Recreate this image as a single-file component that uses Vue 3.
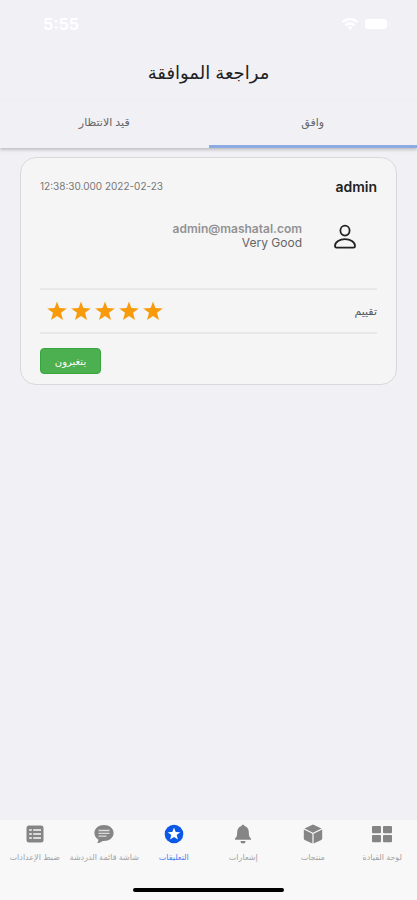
<script setup>
import { ref } from 'vue'

const tabs = ['وافق', 'قيد الانتظار']
const activeTab = ref(0)

const navItems = [
  { icon: 'grid', label: 'لوحة القيادة' },
  { icon: 'cube', label: 'منتجات' },
  { icon: 'bell', label: 'إشعارات' },
  { icon: 'star', label: 'التعليقات' },
  { icon: 'chat', label: 'شاشة قائمة الدردشة' },
  { icon: 'list', label: 'ضبط الإعدادات' },
]
const activeNav = 'star'
</script>

<template>
  <div class="screen" dir="rtl" lang="ar">
    <div class="status" dir="ltr">
      <span class="clock">5:55</span>
      <div class="signals">
        <svg width="18" height="14" viewBox="0 0 18 14" fill="none" stroke="#fff" stroke-width="2.4" aria-hidden="true">
          <path d="M1.5 5.2a10.6 10.6 0 0 1 15 0M4.4 8.4a6.5 6.5 0 0 1 9.2 0" />
          <path d="M9 13l-2.4-2.6a3.4 3.4 0 0 1 4.8 0z" fill="#fff" stroke="none" />
        </svg>
        <svg width="27" height="12" viewBox="0 0 27 12" aria-hidden="true">
          <rect x="1" y="1" width="22" height="10" rx="3" fill="#fff" />
          <path d="M25 4v4" stroke="#f7f7fa" stroke-width="1.5" />
        </svg>
      </div>
    </div>

    <h1 class="title">مراجعة الموافقة</h1>

    <div class="tabs" role="tablist">
      <button
        v-for="(tab, i) in tabs"
        :key="tab"
        type="button"
        role="tab"
        class="tab"
        :class="{ active: activeTab === i }"
        :aria-selected="activeTab === i"
        @click="activeTab = i"
      >{{ tab }}</button>
    </div>

    <main class="content">
      <article class="card">
        <header class="card-head">
          <h2 class="name">admin</h2>
          <time class="date" dir="ltr">12:38:30.000 2022-02-23</time>
        </header>

        <div class="review">
          <svg class="avatar" width="24" height="26" viewBox="0 0 24 26" fill="none" stroke="#222" stroke-width="1.8" stroke-linejoin="round" aria-hidden="true">
            <ellipse cx="12" cy="6.6" rx="4.6" ry="5" />
            <path d="M2 22c0-4.2 4.8-6.8 10-6.8s10 2.6 10 6.800c0 1-.5 1.600-1.500 1.600h-17c-1 0-1.500-.6-1.500-1.600z" />
          </svg>
          <div class="comment" dir="ltr">
            <p class="email">admin@mashatal.com</p>
            <p class="text">Very Good</p>
          </div>
        </div>

        <div class="rating">
          <span class="rating-label">تقييم</span>
          <div class="stars" role="img" aria-label="5 / 5">
            <svg v-for="n in 5" :key="n" width="20" height="20" viewBox="0 0 20 20">
              <path fill="#f79a0b" d="M10 .5l2.4 6.6 7.4.3-5.8 4.4 2 7.1-6-4-6 4 2-7.100L.2 7.400l7.400-.3z" />
            </svg>
          </div>
        </div>

        <footer class="actions">
          <button type="button" class="approve">يتغيرون</button>
        </footer>
      </article>
    </main>

    <nav class="bottom">
      <div class="nav-items">
        <a
          v-for="item in navItems"
          :key="item.icon"
          href="#"
          class="nav-item"
          :class="{ current: item.icon === activeNav }"
          @click.prevent
        >
          <svg width="20" height="20" viewBox="0 0 20 20" fill="currentColor" aria-hidden="true">
            <g v-if="item.icon === 'grid'">
              <rect x="0" y="2" width="9" height="7.300" rx="1" />
              <rect x="11" y="2" width="9" height="7.300" rx="1" />
              <rect x="0" y="11" width="9" height="7.300" rx="1" />
              <rect x="11" y="11" width="9" height="7.300" rx="1" />
            </g>
            <g v-else-if="item.icon === 'cube'">
              <path d="M10 .5l8.500 4-8.500 4.200-8.500-4.200z" />
              <path d="M.8 5.500l8.600 4.200v9.900L1.700 16a1.500 1.500 0 0 1-.9-1.400z" />
              <path d="M19.200 5.500l-8.600 4.200v9.900l7.700-3.600a1.500 1.500 0 0 0 .9-1.400z" />
            </g>
            <g v-else-if="item.icon === 'bell'">
              <path d="M10 .8c.8 0 1.300.5 1.400 1.200 2.900.7 4.400 3 4.400 6 0 4.200.8 5.300 2.200 6.600v1.200H2v-1.200C3.400 13.300 4.200 12.200 4.200 8c0-3 1.500-5.300 4.400-6 .1-.7.6-1.200 1.400-1.200z" />
              <path d="M7.500 17h5a2.500 2.500 0 0 1-5 0z" />
            </g>
            <g v-else-if="item.icon === 'star'">
              <circle cx="10" cy="10" r="9.300" />
              <path fill="#fff" d="M10 3.600l1.700 4.300 4.600.3-3.600 2.900 1.200 4.500-3.900-2.500-3.900 2.500 1.200-4.500-3.600-2.900 4.600-.3z" />
            </g>
            <g v-else-if="item.icon === 'chat'">
              <path d="M10 1c5.300 0 9.600 3.500 9.600 8s-4.200 8-9.600 8c-.6 0-1 0-1.500-.1C7 18.300 5.200 19 3.200 19c.8-1 1.200-2.300 1.100-3.600C1.900 14 .4 11.700.4 9c0-4.500 4.300-8 9.600-8z" />
              <path d="M4.500 6.500h11M4.500 9.300h11M4.500 12.100h8" stroke="#dcdcdc" stroke-width="1.300" />
            </g>
            <g v-else>
              <rect x="1.500" y="1.500" width="17" height="17" rx="2.500" />
              <path d="M4.200 6h2.600M4.200 10h2.600M4.200 14h2.600M8.200 6h7.800M8.200 10h7.800M8.200 14h7.800" stroke="#dcdcdc" stroke-width="2" />
            </g>
          </svg>
          <span class="nav-label">{{ item.label }}</span>
        </a>
      </div>
      <div class="home-bar"></div>
    </nav>
  </div>
</template>

<style>
body {
  background: #f0f0f5;
}
</style>

<style scoped>
.screen {
  display: flex;
  flex-direction: column;
  min-height: 100vh;
  background: #f0f0f5;
  color: #222;
  font-family: Inter, "DejaVu Sans", sans-serif;
}

.status {
  display: flex;
  justify-content: space-between;
  align-items: center;
  height: 48px;
  padding: 0 26px 0 43px;
  color: #fff;
}

.clock {
  font-size: 16px;
  font-weight: 700;
}

.signals {
  display: flex;
  align-items: center;
  gap: 5px;
}

.title {
  margin: 0;
  padding-top: 9px;
  text-align: center;
  font-size: 18px;
  font-weight: 400;
  line-height: 32px;
}

.tabs {
  display: flex;
  margin-top: 11px;
  box-shadow: 0 2px 3px rgba(0, 0, 0, 0.2);
}

.tab {
  flex: 1;
  height: 48px;
  padding: 0 0 2px;
  border: 0;
  border-bottom: 3px solid transparent;
  background: #f0f0f5;
  color: #666;
  font-family: inherit;
  font-size: 11px;
}

.tab.active {
  border-bottom-color: #8cabe2;
}

.content {
  flex: 1;
  padding: 9px 20px 20px;
}

.card {
  padding: 16px 19px 10px;
  border: 1px solid #d9d9db;
  border-radius: 16px;
  background: #f5f5f5;
}

.card-head {
  display: flex;
  justify-content: space-between;
  align-items: center;
  height: 24px;
}

.name {
  margin: 0;
  font-size: 14px;
  font-weight: 600;
}

.date {
  color: #777;
  font-size: 10px;
}

.review {
  display: flex;
  gap: 31px;
  height: 90px;
  padding: 24px 20px 0;
  box-sizing: border-box;
}

.avatar {
  flex: none;
  margin-top: 2px;
}

.comment {
  font-size: 12px;
  line-height: 14px;
  text-align: right;
}

.comment p {
  margin: 0;
}

.email {
  color: #929292;
  font-weight: 600;
}

.text {
  color: #666;
}

.rating {
  display: flex;
  justify-content: space-between;
  align-items: center;
  height: 42px;
  border-top: 2px solid #e8e8e8;
  border-bottom: 2px solid #e8e8e8;
}

.rating-label {
  color: #555;
  font-size: 11px;
}

.stars {
  display: flex;
  gap: 4px;
  padding: 0 7px;
}

.actions {
  display: flex;
  justify-content: flex-end;
  padding-top: 14px;
}

.approve {
  width: 61px;
  height: 26px;
  padding: 0;
  border: 1px solid #38a63d;
  border-radius: 4px;
  background: #4caf50;
  color: #fff;
  font-family: inherit;
  font-size: 10px;
}

.bottom {
  padding-bottom: 8px;
  background: #f8f8f8;
}

.nav-items {
  display: grid;
  grid-template-columns: repeat(6, 1fr);
  height: 68px;
  padding-top: 4px;
  box-sizing: border-box;
}

.nav-item {
  display: flex;
  flex-direction: column;
  align-items: center;
  gap: 6px;
  min-width: 0;
  color: #858585;
  text-decoration: none;
}

.nav-label {
  color: #a2a2a2;
  font-size: 8px;
  line-height: 14px;
  white-space: nowrap;
}

.current {
  color: #0b57e8;
}

.current .nav-label {
  color: #4d80f0;
}

.home-bar {
  width: 36%;
  height: 4px;
  margin: 0 auto;
  border-radius: 2px;
  background: #000;
}
</style>
